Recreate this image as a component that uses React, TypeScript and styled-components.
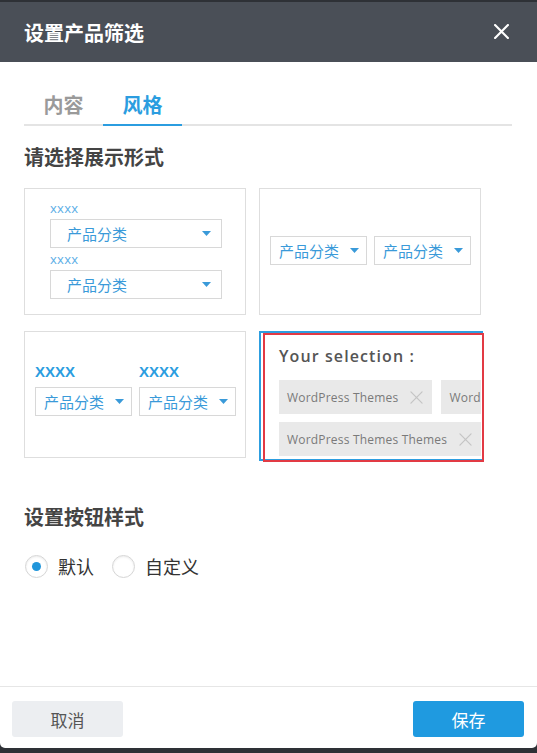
import styled, { createGlobalStyle } from 'styled-components';

const GlobalStyle = createGlobalStyle`
  html, body {
    margin: 0;
    padding: 0;
    background: #2e3136;
  }
  body {
    font-family: "Noto Sans CJK SC", "Noto Sans", sans-serif;
  }
  * {
    box-sizing: border-box;
  }
`;

function Caret() {
  return (
    <CaretIcon width="9" height="5" viewBox="0 0 9 5">
      <path d="M0 0 H9 L4.5 5 Z" fill="#3a9ad9" />
    </CaretIcon>
  );
}

function CloseX({ size, color, width }: { size: number; color: string; width: number }) {
  return (
    <svg width={size} height={size} viewBox="0 0 14 14">
      <path d="M1 1 L13 13 M13 1 L1 13" stroke={color} strokeWidth={width} strokeLinecap="round" />
    </svg>
  );
}

function SelectBox({ wide }: { wide?: boolean }) {
  return (
    <Select $wide={wide}>
      <span>产品分类</span>
      <Caret />
    </Select>
  );
}

export default function App() {
  return (
    <>
      <GlobalStyle />
      <Modal>
        <Header>
          <Title>设置产品筛选</Title>
          <CloseButton>
            <CloseX size={15} color="#ffffff" width={2} />
          </CloseButton>
        </Header>

        <Content>
          <Tabs>
            <Tab>内容</Tab>
            <Tab $active>风格</Tab>
          </Tabs>

          <SectionTitle>请选择展示形式</SectionTitle>

          <Grid>
            <Card>
              <StackLabel>xxxx</StackLabel>
              <SelectBox wide />
              <StackLabel $gap>xxxx</StackLabel>
              <SelectBox wide />
            </Card>

            <Card>
              <Row>
                <SelectBox />
                <SelectBox />
              </Row>
            </Card>

            <Card $shift>
              <Row>
                <Column>
                  <BoldLabel>XXXX</BoldLabel>
                  <SelectBox />
                </Column>
                <Column>
                  <BoldLabel>XXXX</BoldLabel>
                  <SelectBox />
                </Column>
              </Row>
            </Card>

            <SelectedCard>
              <SelectionTitle>Your selection :</SelectionTitle>
              <TagRow>
                <Tag>
                  WordPress Themes
                  <CloseX size={13} color="#c4c4c4" width={1.3} />
                </Tag>
                <Tag>
                  WordPress Themes
                  <CloseX size={13} color="#c4c4c4" width={1.3} />
                </Tag>
              </TagRow>
              <TagRow>
                <Tag>
                  WordPress Themes Themes
                  <CloseX size={13} color="#c4c4c4" width={1.3} />
                </Tag>
              </TagRow>
              <RedFrame />
            </SelectedCard>
          </Grid>

          <SectionTitle $top={47}>设置按钮样式</SectionTitle>

          <Radios>
            <RadioItem>
              <RadioCircle $checked />
              默认
            </RadioItem>
            <RadioItem>
              <RadioCircle />
              自定义
            </RadioItem>
          </Radios>
        </Content>

        <Footer>
          <Button>取消</Button>
          <Button $primary>保存</Button>
        </Footer>
      </Modal>
    </>
  );
}

const Modal = styled.div`
  margin-top: 2px;
  width: 537px;
  height: 746px;
  background: #ffffff;
  border-radius: 0 0 5px 5px;
  display: flex;
  flex-direction: column;
  overflow: hidden;
`;

const Header = styled.div`
  height: 60px;
  flex-shrink: 0;
  background: #4a4f57;
  display: flex;
  align-items: center;
  justify-content: space-between;
  padding: 0 28px 0 24px;
`;

const Title = styled.div`
  color: #ffffff;
  font-size: 20px;
  font-weight: 700;
  margin-top: 1px;
`;

const CloseButton = styled.div`
  display: flex;
  align-items: center;
  margin-top: -1px;
`;

const Content = styled.div`
  flex: 1;
  padding: 0 25px 0 24px;
`;

const Tabs = styled.div`
  margin-top: 24px;
  display: flex;
  border-bottom: 2px solid #e4e4e4;
`;

const Tab = styled.div<{ $active?: boolean }>`
  width: 79px;
  height: 40px;
  line-height: 38px;
  text-align: center;
  font-size: 20px;
  font-weight: 700;
  color: ${(p) => (p.$active ? '#2b9de0' : '#9a9a9a')};
  margin-bottom: -2px;
  border-bottom: 2px solid ${(p) => (p.$active ? '#2b9de0' : 'transparent')};
`;

const SectionTitle = styled.div<{ $top?: number }>`
  margin-top: ${(p) => p.$top ?? 19}px;
  font-size: 20px;
  line-height: 24px;
  font-weight: 700;
  color: #444444;
`;

const Grid = styled.div`
  margin-top: 19px;
  display: grid;
  grid-template-columns: 222px 222px;
  grid-template-rows: 127px 127px;
  column-gap: 13px;
  row-gap: 16px;
`;

const Card = styled.div<{ $shift?: boolean }>`
  border: 1px solid #dedede;
  display: flex;
  flex-direction: column;
  justify-content: center;
  align-items: flex-start;
  padding: 0 24px ${(p) => (p.$shift ? '10px' : '3px')} 25px;
  &:nth-child(2),
  &:nth-child(3) {
    padding-left: 10px;
    padding-right: 10px;
  }
`;

const SelectedCard = styled.div`
  position: relative;
  width: 224px;
  height: 130px;
  border: 2px solid #2d9ee0;
  border-right: none;
  padding: 13px 0 0 18px;
  display: flex;
  flex-direction: column;
  gap: 8px;
`;

const RedFrame = styled.div`
  position: absolute;
  top: 0;
  left: 2px;
  right: -1px;
  bottom: -3px;
  border: 2px solid #e23a44;
  pointer-events: none;
`;

const SelectionTitle = styled.div`
  font-family: "Open Sans", "Noto Sans", sans-serif;
  font-size: 16px;
  font-weight: 600;
  letter-spacing: 1.1px;
  color: #555555;
  line-height: 20px;
  margin-bottom: 6px;
`;

const TagRow = styled.div`
  display: flex;
  gap: 9px;
  width: 202px;
  overflow: hidden;
  flex-shrink: 0;
`;

const Tag = styled.div`
  flex-shrink: 0;
  height: 34px;
  background: #e9e9e9;
  display: flex;
  align-items: center;
  gap: 12px;
  padding: 0 9px 0 8px;
  font-family: "Open Sans", "Noto Sans", sans-serif;
  font-size: 12px;
  letter-spacing: 0.2px;
  color: #7a7a7a;
  white-space: nowrap;
`;

const Row = styled.div`
  display: flex;
  gap: 7px;
`;

const Column = styled.div`
  display: flex;
  flex-direction: column;
  gap: 7px;
`;

const StackLabel = styled.div<{ $gap?: boolean }>`
  font-family: "Open Sans", "Noto Sans", sans-serif;
  font-size: 13px;
  letter-spacing: 0.3px;
  line-height: 14px;
  color: #5aaee6;
  margin: ${(p) => (p.$gap ? '4px' : '0')} 0 4px 0;
`;

const BoldLabel = styled.div`
  font-family: "Liberation Sans", "Noto Sans", sans-serif;
  font-size: 15px;
  font-weight: 700;
  line-height: 16px;
  color: #2b9de0;
`;

const Select = styled.div<{ $wide?: boolean }>`
  width: ${(p) => (p.$wide ? '172px' : '97px')};
  height: 29px;
  border: 1px solid #d8d8d8;
  display: flex;
  align-items: center;
  justify-content: space-between;
  padding: 0 ${(p) => (p.$wide ? '10px' : '7px')} 0 ${(p) => (p.$wide ? '16px' : '8px')};
  font-size: 15px;
  color: #3a9ad9;
`;

const CaretIcon = styled.svg`
  display: block;
`;

const Radios = styled.div`
  margin-top: 24px;
  display: flex;
  gap: 17px;
`;

const RadioItem = styled.label`
  display: flex;
  align-items: center;
  gap: 10px;
  font-size: 18px;
  color: #333333;
  margin-left: 1px;
`;

const RadioCircle = styled.span<{ $checked?: boolean }>`
  width: 23px;
  height: 23px;
  border-radius: 50%;
  border: 1px solid #d6d6d6;
  box-shadow: inset 0 1px 2px rgba(0, 0, 0, 0.08);
  display: flex;
  align-items: center;
  justify-content: center;
  &::after {
    content: '';
    width: 9px;
    height: 9px;
    border-radius: 50%;
    background: ${(p) => (p.$checked ? '#2196db' : 'transparent')};
  }
`;

const Footer = styled.div`
  border-top: 1px solid #e6e6e6;
  display: flex;
  justify-content: space-between;
  padding: 14px 13px 11px 12px;
`;

const Button = styled.div<{ $primary?: boolean }>`
  width: 111px;
  height: 36px;
  border-radius: 3px;
  display: flex;
  align-items: center;
  justify-content: center;
  font-size: 17px;
  background: ${(p) => (p.$primary ? '#1f9ae0' : '#eceef1')};
  color: ${(p) => (p.$primary ? '#ffffff' : '#555555')};
`;
